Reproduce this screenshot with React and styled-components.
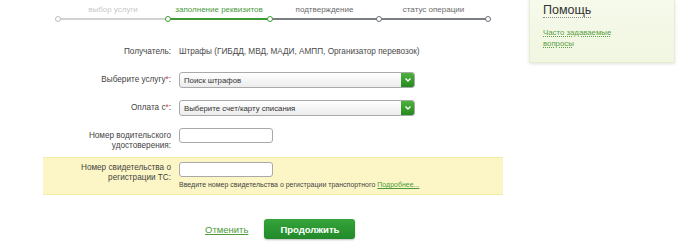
import React from "react";
import styled, { createGlobalStyle } from "styled-components";

const GlobalStyle = createGlobalStyle`
  body {
    margin: 0;
    background: #fff;
    font-family: "Liberation Sans", Arial, sans-serif;
    color: #333;
  }
`;

const steps = [
  { title: "выбор услуги", width: 110, state: "done" },
  { title: "заполнение реквизитов", width: 102, state: "active" },
  { title: "подтверждение", width: 109, state: "todo" },
  { title: "статус операции", width: 109, state: "todo" },
];

const stepColors = {
  done: { text: "#c8c8c8", line: "#d2d2d2", dot: "#bdbdbd" },
  active: { text: "#4a9a3c", line: "#3f9a35", dot: "#3f9a35" },
  todo: { text: "#6a6a6a", line: "#7b7f84", dot: "#6a6e72" },
};

const Page = styled.div`
  display: flex;
  align-items: flex-start;
  width: 700px;
  height: 250px;
  overflow: hidden;
`;

const Main = styled.div`
  width: 529px;
  flex: none;
`;

const Stepper = styled.div`
  display: flex;
  padding: 4px 0 0 58px;
`;

const Step = styled.div`
  width: ${(p) => p.$width}px;
  display: flex;
  flex-direction: column;
`;

const StepTitle = styled.div`
  font-size: 8px;
  line-height: 12px;
  text-align: center;
  white-space: nowrap;
  color: ${(p) => stepColors[p.$state].text};
`;

const StepLine = styled.div`
  position: relative;
  height: 6px;
  &::before {
    content: "";
    position: absolute;
    left: 0;
    right: 0;
    top: 2px;
    height: 2px;
    background: ${(p) => stepColors[p.$state].line};
  }
  &::after {
    content: "";
    position: absolute;
    left: -3px;
    top: 0;
    width: 4px;
    height: 4px;
    border-radius: 50%;
    background: #fff;
    border: 1px solid ${(p) => (p.$state === "todo" && p.$prevActive ? stepColors.active.dot : stepColors[p.$state].dot)};
    z-index: 1;
  }
`;

const EndDot = styled.span`
  position: absolute;
  right: -3px;
  top: 0;
  width: 4px;
  height: 4px;
  border-radius: 50%;
  background: #fff;
  border: 1px solid ${stepColors.todo.dot};
  z-index: 1;
`;

const Form = styled.div`
  margin-top: 24px;
  width: 503px;
  display: flex;
  flex-direction: column;
`;

const Row = styled.div`
  display: grid;
  grid-template-columns: ${(p) => (p.$highlight ? "128px" : "171px")} 1fr;
  column-gap: 8px;
  margin-top: ${(p) => p.$gap || 0}px;
  margin-left: ${(p) => (p.$highlight ? 43 : 0)}px;
  padding: ${(p) => (p.$highlight ? "4px 0 4px" : "0")};
  background: ${(p) => (p.$highlight ? "#fcf6c6" : "transparent")};
  border-top: ${(p) => (p.$highlight ? "1px solid #f6eba6" : "none")};
  border-bottom: ${(p) => (p.$highlight ? "1px solid #f6eba6" : "none")};
  align-items: ${(p) => (p.$center ? "center" : "start")};
`;

const Label = styled.div`
  text-align: right;
  font-size: 8.2px;
  line-height: ${(p) => (p.$multi ? "10px" : "12px")};
  padding-top: ${(p) => p.$offset || 0}px;
  color: #444;
`;

const Req = styled.span`
  color: #d23b3b;
`;

const Value = styled.div`
  font-size: 8.2px;
  line-height: 12px;
  color: #4a4a4a;
`;

const Select = styled.div`
  width: 236px;
  height: 16px;
  box-sizing: border-box;
  border: 1px solid #a9a9a9;
  border-radius: 3px;
  background: linear-gradient(#ffffff, #ececec);
  display: flex;
  align-items: center;
  font-size: 7.8px;
  color: #333;
  padding-left: 4px;
  overflow: hidden;
`;

const SelectText = styled.span`
  flex: 1;
`;

const SelectArrow = styled.span`
  width: 14px;
  height: 16px;
  margin: -1px -1px -1px 0;
  border-radius: 0 3px 3px 0;
  background: linear-gradient(#4fb43f, #23861d);
  display: flex;
  align-items: center;
  justify-content: center;
`;

const Input = styled.div`
  width: 94px;
  height: 15px;
  box-sizing: border-box;
  border: 1px solid #a9a9a9;
  border-radius: 3px;
  background: #fff;
`;

const Hint = styled.div`
  margin-top: 3px;
  font-size: 7px;
  line-height: 10px;
  color: #444;
  white-space: nowrap;
`;

const HintLink = styled.a`
  color: #4c9a3a;
  text-decoration: underline;
  margin-left: 2px;
`;

const Actions = styled.div`
  display: flex;
  align-items: center;
  gap: 16px;
  margin: 24px 0 0 205px;
`;

const CancelLink = styled.a`
  font-size: 9.5px;
  color: #4c9a3a;
  text-decoration: underline;
`;

const PrimaryButton = styled.button`
  width: 91px;
  height: 20px;
  border: none;
  border-radius: 3px;
  background: linear-gradient(#36a43a, #21892a);
  box-shadow: 0 1px 2px rgba(0, 0, 0, 0.25);
  color: #fff;
  font-family: "Liberation Sans", Arial, sans-serif;
  font-weight: bold;
  font-size: 9.5px;
  padding: 0;
`;

const Help = styled.aside`
  width: 146px;
  height: 63px;
  box-sizing: border-box;
  background: linear-gradient(#f6faeb, #f0f6e0);
  border-left: 1px solid #e6eed6;
  border-right: 1px solid #e6eed6;
  border-bottom: 1px solid #e3ebd2;
  box-shadow: 0 1px 3px rgba(0, 0, 0, 0.12);
  padding: 0 0 0 13px;
`;

const HelpTitle = styled.div`
  display: inline-block;
  margin-top: -2px;
  font-size: 12.5px;
  line-height: 14px;
  color: #333;
  border-bottom: 1px dotted #888;
`;

const HelpLink = styled.a`
  display: block;
  margin-top: 9px;
  width: 76px;
  font-size: 7.8px;
  line-height: 11px;
  color: #5c9e45;
  text-decoration: underline dotted;
`;

const Chevron = () => (
  <svg width="6" height="4" viewBox="0 0 6 4">
    <path d="M0.5 0.5 L3 3 L5.5 0.5" fill="none" stroke="#fff" strokeWidth="1.4" />
  </svg>
);

export default function App() {
  return (
    <>
      <GlobalStyle />
      <Page>
        <Main>
          <Stepper>
            {steps.map((s, i) => (
              <Step key={s.title} $width={s.width}>
                <StepTitle $state={s.state}>{s.title}</StepTitle>
                <StepLine $state={s.state} $prevActive={i > 0 && steps[i - 1].state === "active"}>
                  {i === steps.length - 1 && <EndDot />}
                </StepLine>
              </Step>
            ))}
          </Stepper>

          <Form>
            <Row>
              <Label>Получатель:</Label>
              <Value>Штрафы (ГИБДД, МВД, МАДИ, АМПП, Организатор перевозок)</Value>
            </Row>

            <Row $gap={14} $center>
              <Label>
                Выберите услугу<Req>*</Req>:
              </Label>
              <Select>
                <SelectText>Поиск штрафов</SelectText>
                <SelectArrow>
                  <Chevron />
                </SelectArrow>
              </Select>
            </Row>

            <Row $gap={12} $center>
              <Label>
                Оплата с<Req>*</Req>:
              </Label>
              <Select>
                <SelectText>Выберите счет/карту списания</SelectText>
                <SelectArrow>
                  <Chevron />
                </SelectArrow>
              </Select>
            </Row>

            <Row $gap={12}>
              <Label $multi $offset={3}>
                Номер водительского
                <br />
                удостоверения:
              </Label>
              <Input />
            </Row>

            <Row $gap={6} $highlight>
              <Label $multi $offset={1}>
                Номер свидетельства о
                <br />
                регистрации ТС:
              </Label>
              <div>
                <Input />
                <Hint>
                  Введите номер свидетельства о регистрации транспортного
                  <HintLink href="#">Подробнее...</HintLink>
                </Hint>
              </div>
            </Row>
          </Form>

          <Actions>
            <CancelLink href="#">Отменить</CancelLink>
            <PrimaryButton>Продолжить</PrimaryButton>
          </Actions>
        </Main>

        <Help>
          <HelpTitle>Помощь</HelpTitle>
          <HelpLink href="#">Часто задаваемые вопросы</HelpLink>
        </Help>
      </Page>
    </>
  );
}
